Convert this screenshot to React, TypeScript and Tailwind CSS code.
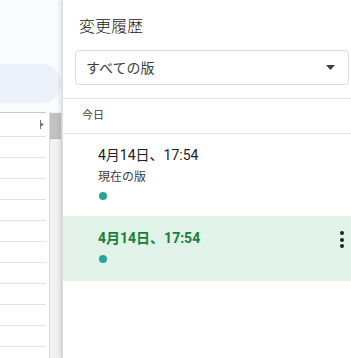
import React from "react";

const font = { fontFamily: "Roboto, 'Noto Sans CJK JP', sans-serif" };

export default function App() {
  const rows = Array.from({ length: 11 });
  return (
    <div className="w-[351px] h-[358px] flex overflow-hidden bg-white" style={font}>
      {/* left sheet area */}
      <div className="w-[62px] shrink-0 flex flex-col bg-[#f9fbfd] overflow-hidden">
        <div className="h-[64px] shrink-0" />
        <div className="h-[39px] shrink-0 bg-[#edf1f9] rounded-r-[20px] mr-[1px]" />
        <div className="h-[9px] shrink-0" />
        <div className="flex-1 min-h-0 flex bg-white overflow-hidden">
          <div className="w-[46px] shrink-0 flex flex-col border-t border-[#c4c7c5]">
            <div className="h-[24px] shrink-0 border-b border-[#e1e1e1] flex items-center justify-end pr-[1px]">
              <svg width="5" height="9" viewBox="0 0 5 9">
                <rect x="0" y="0" width="1" height="9" fill="#777" />
                <path d="M1 2.5 L4 4.5 L1 6.5 Z" fill="#777" />
              </svg>
            </div>
            {rows.map((_, i) => (
              <div key={i} className="h-[21px] shrink-0 border-b border-[#e1e1e1]" />
            ))}
          </div>
          <div className="w-[3px] shrink-0" />
          <div className="w-[13px] shrink-0 flex flex-col bg-[#f1f1f1] border-l border-[#dcdcdc] border-r border-r-[#e8e8e8]">
            <div className="mt-[1px] h-[26px] shrink-0 bg-[#c1c1c1] border-b border-[#b5b5b5]" />
          </div>
        </div>
      </div>

      {/* right panel */}
      <div className="flex-1 flex flex-col bg-white border-l border-[#dadce0] shadow-[-2px_0_4px_rgba(60,64,67,0.15)]">
        <div className="pt-[15px] pl-[16px] h-[39px] shrink-0 text-[16px] leading-[24px] text-[#202124] font-light">
          変更履歴
        </div>
        <div className="mt-[11px] ml-[12px] w-[274px] h-[35px] shrink-0 border border-[#dadce0] rounded-[4px] flex items-center justify-between pl-[10px] pr-[13px]">
          <span className="text-[14px] leading-[20px] text-[#3c4043]">すべての版</span>
          <svg width="9" height="5" viewBox="0 0 9 5">
            <path d="M0 0 L9 0 L4.5 5 Z" fill="#3c4043" />
          </svg>
        </div>
        <div className="mt-[13px] border-t border-[#e0e0e0] h-[35px] shrink-0 flex items-center pl-[19px] text-[11px] text-[#3c4043]">
          今日
        </div>
        <div className="border-t border-[#e0e0e0] pl-[35px] pt-[11px] pb-[16px] flex flex-col shrink-0">
          <div className="text-[14px] leading-[20px] text-[#202124]">4月14日、17:54</div>
          <div className="mt-[4px] text-[12px] leading-[16px] text-[#3c4043]">現在の版</div>
          <div className="mt-[7px] ml-[1px] w-[8px] h-[8px] rounded-full bg-[#26a69a]" />
        </div>
        <div className="bg-[#e1f2e8] pl-[35px] pt-[12px] pb-[18px] flex relative shrink-0">
          <div className="flex flex-col">
            <div className="text-[14px] leading-[20px] font-bold text-[#188038]">4月14日、17:54</div>
            <div className="mt-[7px] ml-[1px] w-[8px] h-[8px] rounded-full bg-[#26a69a]" />
          </div>
          <div className="absolute left-[277px] top-[15px] flex flex-col gap-[2.5px]">
            <div className="w-[4px] h-[4px] rounded-full bg-[#202124]" />
            <div className="w-[4px] h-[4px] rounded-full bg-[#202124]" />
            <div className="w-[4px] h-[4px] rounded-full bg-[#202124]" />
          </div>
        </div>
        <div className="flex-1" />
      </div>
    </div>
  );
}
